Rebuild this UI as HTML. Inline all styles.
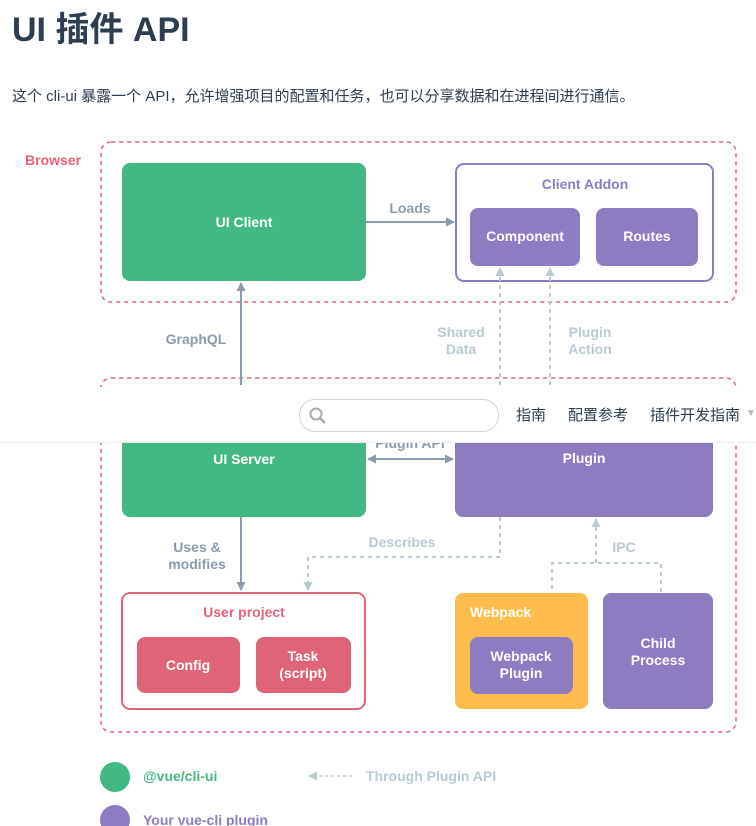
<!DOCTYPE html>
<html><head><meta charset="utf-8"><style>
body{margin:0;width:756px;height:826px;overflow:hidden;background:#fff;position:relative;font-family:"Liberation Sans","Noto Sans CJK SC",sans-serif;color:#2c3e50}
h1{position:absolute;left:12px;top:8px;margin:0;font-size:34px;font-weight:bold;line-height:44px}
p{position:absolute;left:12px;top:86px;margin:0;font-size:15px;line-height:22px;color:#2c3e50}
svg{position:absolute;left:0;top:0}
svg text{font-family:"Liberation Sans",sans-serif;font-weight:bold;font-size:14px}
.nav{position:absolute;left:0;top:387px;width:756px;height:55px;background:#fff;border-bottom:1px solid #eaecef}
.search{position:absolute;left:299px;top:12px;width:198px;height:31px;border:1px solid #cfd4db;border-radius:16px}
.nav span{position:absolute;top:17px;font-size:15px;color:#2c3e50}
</style></head><body>
<h1>UI 插件 API</h1>
<p>这个 cli-ui 暴露一个 API，允许增强项目的配置和任务，也可以分享数据和在进程间进行通信。</p>
<svg width="756" height="826" viewBox="0 0 756 826">
<defs><marker id="a" markerUnits="userSpaceOnUse" markerWidth="9" markerHeight="9" refX="8" refY="4.5" orient="auto"><path d="M0,0 L9,4.5 L0,9z" fill="#8a9bb0"/></marker>
<marker id="b" markerUnits="userSpaceOnUse" markerWidth="9" markerHeight="9" refX="8" refY="4.5" orient="auto"><path d="M0,0 L9,4.5 L0,9z" fill="#b8cad2"/></marker>
<marker id="s" markerUnits="userSpaceOnUse" markerWidth="9" markerHeight="9" refX="1" refY="4.5" orient="auto"><path d="M9,0 L0,4.5 L9,9z" fill="#8a9bb0"/></marker></defs>
<g fill="none" stroke="#e96178" stroke-width="1.5" stroke-dasharray="4 4">
<rect x="101" y="142" width="635" height="160" rx="10"/>
<rect x="101" y="378" width="635" height="354" rx="10"/></g>
<text x="25" y="165" fill="#e96178">Browser</text>
<rect x="122" y="163" width="244" height="118" rx="8" fill="#42b983"/>
<text x="244" y="227" fill="#fff" text-anchor="middle">UI Client</text>
<line x1="366" y1="222" x2="454" y2="222" stroke="#8a9bb0" stroke-width="2" marker-end="url(#a)"/>
<text x="410" y="213" fill="#8a9bb0" text-anchor="middle">Loads</text>
<rect x="456" y="164" width="257" height="117" rx="8" fill="#fff" stroke="#8e7cc3" stroke-width="2"/>
<text x="585" y="189" fill="#8e7cc3" text-anchor="middle">Client Addon</text>
<rect x="470" y="208" width="110" height="58" rx="8" fill="#8e7cc3"/>
<text x="525" y="241" fill="#fff" text-anchor="middle">Component</text>
<rect x="596" y="208" width="102" height="58" rx="8" fill="#8e7cc3"/>
<text x="647" y="241" fill="#fff" text-anchor="middle">Routes</text>
<g stroke="#b8cad2" stroke-width="2" stroke-dasharray="4 4" fill="none">
<line x1="500" y1="385" x2="500" y2="268" marker-end="url(#b)"/>
<line x1="550" y1="385" x2="550" y2="268" marker-end="url(#b)"/>
<polyline points="500,517 500,557 308,557 308,590" marker-end="url(#b)"/>
<polyline points="552,637 552,563 661,563 661,592"/>
<line x1="596" y1="563" x2="596" y2="519" marker-end="url(#b)"/></g>
<g fill="#b8cad2" text-anchor="middle"><text x="461" y="337">Shared</text><text x="461" y="354">Data</text>
<text x="590" y="337">Plugin</text><text x="590" y="354">Action</text>
<text x="402" y="547">Describes</text><text x="624" y="552">IPC</text></g>
<line x1="241" y1="385" x2="241" y2="283" stroke="#8a9bb0" stroke-width="2" marker-end="url(#a)"/>
<text x="196" y="344" fill="#8a9bb0" text-anchor="middle">GraphQL</text>
<rect x="122" y="400" width="244" height="117" rx="8" fill="#42b983"/>
<text x="244" y="464" fill="#fff" text-anchor="middle">UI Server</text>
<rect x="455" y="400" width="258" height="117" rx="8" fill="#8e7cc3"/>
<text x="584" y="463" fill="#fff" text-anchor="middle">Plugin</text>
<line x1="368" y1="459" x2="453" y2="459" stroke="#8a9bb0" stroke-width="2" marker-end="url(#a)" marker-start="url(#s)"/>
<text x="410" y="448" fill="#8a9bb0" text-anchor="middle">Plugin API</text>
<line x1="241" y1="517" x2="241" y2="590" stroke="#8a9bb0" stroke-width="2" marker-end="url(#a)"/>
<text x="197" y="552" fill="#8a9bb0" text-anchor="middle">Uses &amp;</text><text x="197" y="569" fill="#8a9bb0" text-anchor="middle">modifies</text>
<rect x="122" y="593" width="243" height="116" rx="8" fill="#fff" stroke="#e06478" stroke-width="2"/>
<text x="244" y="617" fill="#e06478" text-anchor="middle">User project</text>
<rect x="137" y="637" width="103" height="56" rx="8" fill="#e06478"/>
<text x="188" y="670" fill="#fff" text-anchor="middle">Config</text>
<rect x="256" y="637" width="95" height="56" rx="8" fill="#e06478"/>
<text x="303" y="661" fill="#fff" text-anchor="middle">Task</text><text x="303" y="678" fill="#fff" text-anchor="middle">(script)</text>
<rect x="455" y="593" width="133" height="116" rx="8" fill="#fdbc4b"/>
<text x="470" y="617" fill="#fff">Webpack</text>
<rect x="470" y="637" width="103" height="57" rx="8" fill="#8e7cc3"/>
<text x="521" y="661" fill="#fff" text-anchor="middle">Webpack</text><text x="521" y="678" fill="#fff" text-anchor="middle">Plugin</text>
<rect x="603" y="593" width="110" height="116" rx="8" fill="#8e7cc3"/>
<text x="658" y="648" fill="#fff" text-anchor="middle">Child</text><text x="658" y="665" fill="#fff" text-anchor="middle">Process</text>
<circle cx="115" cy="777" r="15" fill="#42b983"/>
<text x="143" y="781" fill="#42b983">@vue/cli-ui</text>
<line x1="352" y1="776" x2="309" y2="776" stroke="#b8cad2" stroke-width="1.5" stroke-dasharray="3 3" marker-end="url(#b)"/>
<text x="366" y="781" fill="#b8cad2">Through Plugin API</text>
<circle cx="115" cy="820" r="15" fill="#8e7cc3"/>
<text x="143" y="825" fill="#8e7cc3">Your vue-cli plugin</text>
</svg>
<div class="nav"><div class="search"><svg width="20" height="20" style="left:8px;top:6px"><circle cx="8" cy="8" r="5.5" fill="none" stroke="#aaa" stroke-width="2"/><line x1="12" y1="12" x2="17" y2="17" stroke="#aaa" stroke-width="2.5"/></svg></div>
<span style="left:516px">指南</span><span style="left:568px">配置参考</span><span style="left:650px">插件开发指南</span><span style="left:746px;font-size:10px;top:21px;color:#bbb">▼</span></div>
</body></html>
